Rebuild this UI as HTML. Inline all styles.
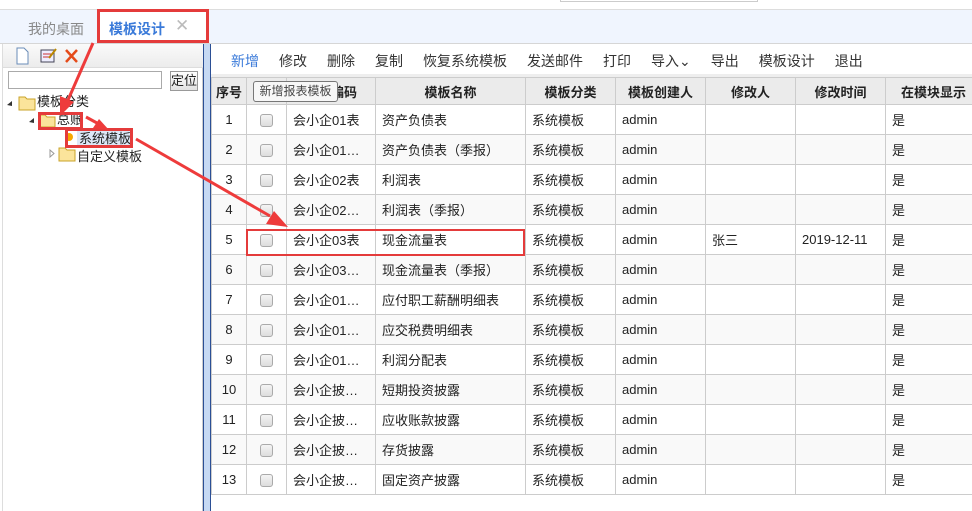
<!DOCTYPE html>
<html><head><meta charset="utf-8"><style>
*{margin:0;padding:0;box-sizing:border-box}
body{width:972px;height:511px;overflow:hidden;background:#fff;font-family:"Liberation Sans","Noto Sans CJK SC",sans-serif;font-size:13px;color:#222;position:relative}
.abs{position:absolute}
table{border-collapse:collapse;table-layout:fixed}
td,th{border:1px solid #ccc;height:30px;white-space:nowrap;overflow:hidden;padding:0 6px;text-align:left;font-weight:normal}
th{background:#ebebeb;font-weight:bold;text-align:center;height:27px}
tr:nth-child(odd) td{background:#f9f9f9}
td.c{text-align:center}
.cb{display:inline-block;width:13px;height:13px;border:1px solid #aaa;border-radius:3px;background:linear-gradient(#f4f4f4,#ddd);vertical-align:middle}
.tb span{margin-right:20px}
</style></head><body>
<div class="abs" style="left:560px;top:0;width:198px;height:2px;border:1px solid #ccc;border-top:none"></div>
<div class="abs" style="left:0;top:9px;width:972px;height:35px;background:#f0f5fe;border-top:1px solid #ddd;border-bottom:1px solid #d6d6d6"></div>
<div class="abs" style="left:28px;top:19px;color:#888;font-size:14px">我的桌面</div>
<div class="abs" style="left:99px;top:10px;width:107px;height:33px;background:#fff;border-bottom:2px solid #3a7ad9"></div>
<div class="abs" style="left:109px;top:19px;color:#3a7ad9;font-size:14px;font-weight:bold">模板设计</div>
<div class="abs" style="left:175px;top:16px;color:#bbb;font-size:17px">✕</div>
<div class="abs" style="left:97px;top:9px;width:112px;height:34px;border:3px solid #e43b3b"></div>
<div class="abs" style="left:2px;top:44px;width:201px;height:467px;border-left:1px solid #ddd;border-right:1px solid #ccc"></div>
<div class="abs" style="left:3px;top:44px;width:200px;height:24px;background:linear-gradient(#fafafa,#ececec);border-bottom:1px solid #ddd"></div>
<svg class="abs" style="left:14px;top:47px" width="70" height="18"><path d="M3 1h7l4 4v12H3z" fill="#fff" stroke="#6a8cb8"/><rect x="27" y="3" width="13" height="12" fill="#eef" stroke="#445"/><path d="M29 7h8M29 10h8" stroke="#c33"/><path d="M35 11l7-9" stroke="#b80" stroke-width="2"/><path d="M52 3l11 12M63 3l-11 12" stroke="#e54b1a" stroke-width="2.5"/></svg>
<div class="abs" style="left:8px;top:71px;width:154px;height:18px;border:1px solid #aaa"></div>
<div class="abs" style="left:170px;top:71px;width:28px;height:20px;border:1px solid #999;background:linear-gradient(#fff,#e2e2e2);font-size:13px;text-align:center;line-height:18px">定位</div>
<svg class="abs" style="left:0;top:92px" width="200" height="75">
<path d="M7 13l5-4v5z" fill="#333"/><path d="M19 5h6l2 2h8v11H19z" fill="#fbe49b" stroke="#c9a32a"/>
<path d="M29 30l5-4v5z" fill="#333"/><path d="M39 23h6l2 2h8v10H39z" fill="#fbe49b" stroke="#c9a32a"/>
<circle cx="69" cy="45" r="4" fill="#f6a800"/>
<path d="M50 58l4 3.5-4 3.5z" fill="none" stroke="#999"/><path d="M59 56h6l2 2h8v11H59z" fill="#fbe49b" stroke="#c9a32a"/>
</svg>
<div class="abs" style="left:37px;top:91px;font-size:13px">模板分类</div>
<div class="abs" style="left:57px;top:109px;font-size:13px">总账</div>
<div class="abs" style="left:77px;top:128px;font-size:13px;background:#dde8f7;padding:0 2px">系统模板</div>
<div class="abs" style="left:77px;top:146px;font-size:13px">自定义模板</div>
<div class="abs" style="left:38px;top:112px;width:45px;height:18px;border:3px solid #e43b3b"></div>
<div class="abs" style="left:65px;top:128px;width:68px;height:20px;border:3px solid #e43b3b"></div>
<div class="abs" style="left:203px;top:44px;width:8px;height:467px;background:#c6d9f3;border-left:1px solid #2b4f95;border-right:1px solid #2b4f95"></div>
<div class="abs tb" style="left:231px;top:51px;font-size:14px;color:#333"><span style="color:#3a7ad9">新增</span><span>修改</span><span>删除</span><span>复制</span><span>恢复系统模板</span><span>发送邮件</span><span>打印</span><span>导入⌄</span><span>导出</span><span>模板设计</span><span>退出</span></div>
<div class="abs" style="left:211px;top:74px;width:761px;height:3px;background:#eee"></div>
<table class="abs" style="left:211px;top:77px;width:770px">
<colgroup><col style="width:35px"><col style="width:40px"><col style="width:89px"><col style="width:150px"><col style="width:90px"><col style="width:90px"><col style="width:90px"><col style="width:90px"><col style="width:96px"></colgroup>
<tr><th style="padding:0">序号</th><th></th><th>模板编码</th><th>模板名称</th><th>模板分类</th><th>模板创建人</th><th>修改人</th><th>修改时间</th><th>在模块显示</th></tr>
<tr><td class="c">1</td><td class="c"><i class="cb"></i></td><td>会小企01表</td><td>资产负债表</td><td>系统模板</td><td>admin</td><td></td><td></td><td>是</td></tr>
<tr><td class="c">2</td><td class="c"><i class="cb"></i></td><td>会小企01…</td><td>资产负债表（季报）</td><td>系统模板</td><td>admin</td><td></td><td></td><td>是</td></tr>
<tr><td class="c">3</td><td class="c"><i class="cb"></i></td><td>会小企02表</td><td>利润表</td><td>系统模板</td><td>admin</td><td></td><td></td><td>是</td></tr>
<tr><td class="c">4</td><td class="c"><i class="cb"></i></td><td>会小企02…</td><td>利润表（季报）</td><td>系统模板</td><td>admin</td><td></td><td></td><td>是</td></tr>
<tr><td class="c">5</td><td class="c"><i class="cb"></i></td><td>会小企03表</td><td>现金流量表</td><td>系统模板</td><td>admin</td><td>张三</td><td>2019-12-11</td><td>是</td></tr>
<tr><td class="c">6</td><td class="c"><i class="cb"></i></td><td>会小企03…</td><td>现金流量表（季报）</td><td>系统模板</td><td>admin</td><td></td><td></td><td>是</td></tr>
<tr><td class="c">7</td><td class="c"><i class="cb"></i></td><td>会小企01…</td><td>应付职工薪酬明细表</td><td>系统模板</td><td>admin</td><td></td><td></td><td>是</td></tr>
<tr><td class="c">8</td><td class="c"><i class="cb"></i></td><td>会小企01…</td><td>应交税费明细表</td><td>系统模板</td><td>admin</td><td></td><td></td><td>是</td></tr>
<tr><td class="c">9</td><td class="c"><i class="cb"></i></td><td>会小企01…</td><td>利润分配表</td><td>系统模板</td><td>admin</td><td></td><td></td><td>是</td></tr>
<tr><td class="c">10</td><td class="c"><i class="cb"></i></td><td>会小企披…</td><td>短期投资披露</td><td>系统模板</td><td>admin</td><td></td><td></td><td>是</td></tr>
<tr><td class="c">11</td><td class="c"><i class="cb"></i></td><td>会小企披…</td><td>应收账款披露</td><td>系统模板</td><td>admin</td><td></td><td></td><td>是</td></tr>
<tr><td class="c">12</td><td class="c"><i class="cb"></i></td><td>会小企披…</td><td>存货披露</td><td>系统模板</td><td>admin</td><td></td><td></td><td>是</td></tr>
<tr><td class="c">13</td><td class="c"><i class="cb"></i></td><td>会小企披…</td><td>固定资产披露</td><td>系统模板</td><td>admin</td><td></td><td></td><td>是</td></tr>
</table>
<div class="abs" style="left:253px;top:81px;width:85px;height:21px;border:1px solid #777;border-radius:3px;background:#f7f7f7;font-size:12px;color:#444;line-height:19px;text-align:center">新增报表模板</div>
<div class="abs" style="left:246px;top:229px;width:279px;height:27px;border:2px solid #e43b3b"></div>
<svg class="abs" style="left:0;top:0" width="972" height="511">
<g stroke="#ee3b3b" stroke-width="3" fill="#ee3b3b">
<line x1="93" y1="43" x2="68" y2="100"/><path d="M60 116l0-20 14 6z" stroke="none"/>
<line x1="86" y1="117" x2="97" y2="123"/><path d="M109 130l-16-2 6-9z" stroke="none"/>
<line x1="136" y1="139" x2="270" y2="216"/><path d="M288 227l-22-3 8-13z" stroke="none"/>
</g></svg>
</body></html>
